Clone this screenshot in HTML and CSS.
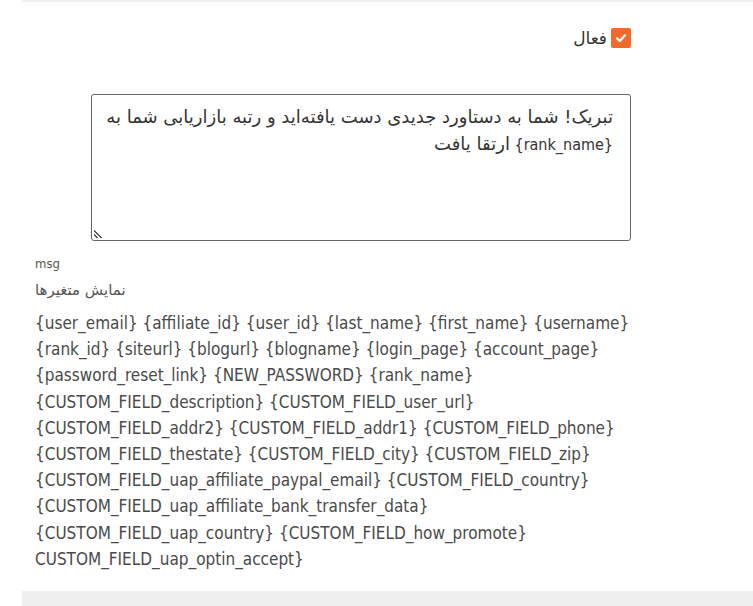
FILE: index.html
```html
<!DOCTYPE html>
<html lang="fa">
<head>
<meta charset="utf-8">
<link rel="stylesheet" href="styles.css">
</head>
<body>
<div class="panel">
  <div class="form">
    <div class="active-row">
      <label class="check-label"><span class="check"><svg viewBox="0 0 20 20" width="20" height="20"><path d="M6 10.2 L8.8 13 L14 7.2" fill="none" stroke="#fff" stroke-width="2.2" stroke-linecap="round" stroke-linejoin="round"/></svg></span><span class="check-text">فعال</span></label>
    </div>
    <div class="area-row">
      <div class="textarea" dir="rtl"><span class="fa">تبریک! شما به دستاورد جدیدی دست یافته‌اید و رتبه بازاریابی شما به</span> {rank_name} <span class="fa">ارتقا یافت</span><span class="grip"></span></div>
    </div>
  </div>
  <div class="meta meta-first">msg</div>
  <div class="meta meta-fa">نمایش متغیرها</div>
  <div class="vars">{user_email} {affiliate_id} {user_id} {last_name} {first_name} {username}<br>{rank_id} {siteurl} {blogurl} {blogname} {login_page} {account_page}<br>{password_reset_link} {NEW_PASSWORD} {rank_name}<br>{CUSTOM_FIELD_description} {CUSTOM_FIELD_user_url}<br>{CUSTOM_FIELD_addr2} {CUSTOM_FIELD_addr1} {CUSTOM_FIELD_phone}<br>{CUSTOM_FIELD_thestate} {CUSTOM_FIELD_city} {CUSTOM_FIELD_zip}<br>{CUSTOM_FIELD_uap_affiliate_paypal_email} {CUSTOM_FIELD_country}<br>{CUSTOM_FIELD_uap_affiliate_bank_transfer_data}<br>{CUSTOM_FIELD_uap_country} {CUSTOM_FIELD_how_promote}<br>CUSTOM_FIELD_uap_optin_accept}</div>
  <div class="footer-bar"></div>
</div>
</body>
</html>
```

FILE: styles.css
```css
html, body {
  margin: 0;
  padding: 0;
  background: #fff;
}
body {
  font-family: "DejaVu Sans Condensed", "DejaVu Sans", sans-serif;
  color: #444;
}
.panel {
  margin-left: 22px;
  border-top: 2px solid #eeeeee;
}
.form {
  width: 609px;
  display: flex;
  flex-direction: column;
  align-items: flex-end;
}
.active-row {
  margin-top: 26px;
  height: 20px;
}
.check-label {
  display: flex;
  flex-direction: row-reverse;
  align-items: center;
  gap: 4px;
}
.check {
  width: 20px;
  height: 20px;
  background: #f26a2b;
  border-radius: 2px;
  display: block;
}
.check svg { display: block; }
.check-text {
  font-family: "DejaVu Sans", sans-serif;
  font-size: 17px;
  line-height: 20px;
  color: #333;
}
.area-row {
  margin-top: 46px;
}
.textarea {
  position: relative;
  box-sizing: border-box;
  width: 540px;
  height: 147px;
  border: 1px solid #666;
  border-radius: 3px;
  padding: 9px 17px 0 10px;
  font-family: "DejaVu Sans Condensed", "DejaVu Sans", sans-serif;
  font-size: 16px;
  line-height: 26px;
  color: #333;
  text-align: right;
}
.textarea .fa {
  font-family: "DejaVu Sans", sans-serif;
  font-size: 18px;
}
.grip {
  position: absolute;
  left: 2px;
  bottom: 2px;
  width: 8px;
  height: 8px;
  background: linear-gradient(45deg, transparent 14%, #555 14%, #555 28%, transparent 28%, transparent 42%, #555 42%, #555 56%, transparent 56%);
}
.meta {
  margin-left: 13px;
  font-size: 13px;
  line-height: 18px;
  color: #555;
}
.meta-first { margin-top: 14px; }
.meta-fa {
  margin-top: 7px;
  font-family: "DejaVu Sans", sans-serif;
  font-size: 15px;
  line-height: 20px;
}
.vars {
  margin-left: 13px;
  margin-top: 10px;
  font-size: 17px;
  line-height: 26.2px;
  color: #4a4a4a;
}
.footer-bar {
  margin-top: 19px;
  height: 20px;
  background: #f0f0f0;
}
```
